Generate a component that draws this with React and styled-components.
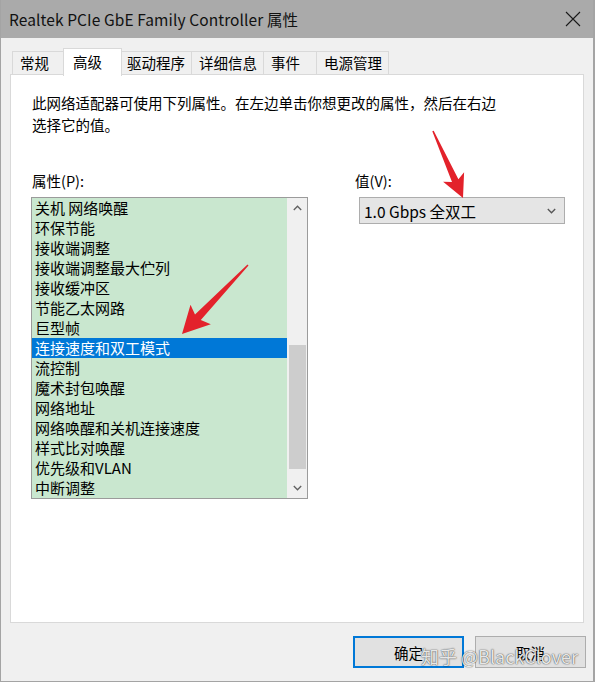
import React from "react";
import styled, { createGlobalStyle } from "styled-components";

const Global = createGlobalStyle`
  html, body { margin: 0; padding: 0; background: #f0f0f0; }
  body { font-family: "Noto Sans CJK SC", "Noto Sans", sans-serif; color: #000; }
`;

const Window = styled.div`
  position: relative;
  width: 595px;
  height: 682px;
  box-sizing: border-box;
  background: #f0f0f0;
  border-left: 1px solid #a4a4a4;
  border-right: 2px solid #a4a4a4;
  border-bottom: 1px solid #a4a4a4;
  display: flex;
  flex-direction: column;
  overflow: hidden;
`;

const TitleBar = styled.div`
  height: 38px;
  flex: none;
  background: #aaaaaa;
  display: flex;
  align-items: center;
  justify-content: space-between;
  padding: 0 14px 0 9px;
  margin-left: -1px;
  margin-right: -2px;
`;

const Title = styled.div`
  font-size: 15.5px;
  color: #111;
  letter-spacing: 0.1px;
`;

const Close = styled.svg`
  width: 16px;
  height: 16px;
`;

const Body = styled.div`
  flex: 1;
  display: flex;
  flex-direction: column;
  padding: 10px 9px 0 9px;
`;

const Tabs = styled.div`
  height: 27px;
  display: flex;
  align-items: flex-end;
  padding-left: 3px;
  position: relative;
  z-index: 1;
`;

const Tab = styled.div`
  box-sizing: border-box;
  min-width: ${(p) => (p.$active ? "59px" : "54px")};
  height: ${(p) => (p.$active ? "28px" : "24px")};
  margin: ${(p) => (p.$active ? "0 -2px -1px -3px" : "0 0 0 -1px")};
  padding: ${(p) => (p.$active ? "2px 9px 0" : "0 6px 0 7px")};
  background: ${(p) => (p.$active ? "#ffffff" : "#f0f0f0")};
  border: 1px solid #d9d9d9;
  border-bottom: ${(p) => (p.$active ? "none" : "1px solid #d9d9d9")};
  font-size: 14.5px;
  line-height: 22px;
  position: relative;
  z-index: ${(p) => (p.$active ? 2 : 1)};
  white-space: nowrap;
`;

const Panel = styled.div`
  height: 549px;
  box-sizing: border-box;
  background: #ffffff;
  border: 1px solid #d9d9d9;
  margin-top: -1px;
  padding: 17px 20px 0 20px;
  display: flex;
  flex-direction: column;
`;

const Desc = styled.p`
  margin: 0;
  font-size: 14.5px;
  line-height: 22px;
  padding-left: 1px;
  white-space: nowrap;
`;

const Columns = styled.div`
  margin-top: 34px;
  display: grid;
  grid-template-columns: 277px 1fr;
  column-gap: 46px;
`;

const Col = styled.div`
  display: flex;
  flex-direction: column;
`;

const Label = styled.div`
  font-size: 14.5px;
  line-height: 22px;
  padding-left: ${(p) => p.$pad || 1}px;
  margin-bottom: 5px;
`;

const ListBox = styled.div`
  box-sizing: border-box;
  width: 277px;
  height: 302px;
  border: 1px solid #9b9b9b;
  background: #c9e7cf;
  display: flex;
`;

const Items = styled.div`
  flex: 1;
  display: flex;
  flex-direction: column;
`;

const Item = styled.div`
  height: 20px;
  line-height: 20px;
  font-size: 15px;
  padding-left: 3px;
  background: ${(p) => (p.$selected ? "#0078d7" : "transparent")};
  color: ${(p) => (p.$selected ? "#ffffff" : "#000")};
  white-space: nowrap;
`;

const ScrollBar = styled.div`
  width: 20px;
  background: #f0f0f0;
  display: flex;
  flex-direction: column;
`;

const ScrollBtn = styled.div`
  height: 20px;
  display: flex;
  align-items: center;
  justify-content: center;
  flex: none;
`;

const Track = styled.div`
  flex: 1;
  display: flex;
  flex-direction: column;
  align-items: center;
  padding-top: ${(p) => p.$offset}px;
`;

const Thumb = styled.div`
  width: 17px;
  height: ${(p) => p.$size}px;
  background: #cdcdcd;
`;

const Combo = styled.div`
  box-sizing: border-box;
  margin-left: 5px;
  width: 206px;
  height: 27px;
  background: #e5e5e5;
  border: 1px solid #adadad;
  display: flex;
  align-items: center;
  justify-content: space-between;
  padding: 0 8px 0 4px;
  font-size: 15.5px;
`;

const Footer = styled.div`
  display: flex;
  justify-content: flex-end;
  gap: 11px;
  padding-top: 13px;
  margin-right: -2px;
`;

const Button = styled.div`
  box-sizing: border-box;
  width: 111px;
  height: 32px;
  background: #e1e1e1;
  border: ${(p) => (p.$default ? "2px solid #0078d7" : "1px solid #adadad")};
  display: flex;
  align-items: center;
  justify-content: center;
  font-size: 14.5px;
`;

const Overlay = styled.svg`
  position: absolute;
  left: -1px;
  top: 0;
  width: 595px;
  height: 682px;
  pointer-events: none;
`;

const Watermark = styled.div`
  position: absolute;
  left: 420px;
  top: 643px;
  font-size: 18px;
  color: rgba(248, 248, 248, 0.92);
  text-shadow: 0 0 1px rgba(0, 0, 0, 0.75), 0 0 2px rgba(0, 0, 0, 0.35);
  white-space: nowrap;
  pointer-events: none;
`;

function arrowPoints(tail, tip, headLen, headHalf, shaftTail, shaftHead) {
  const dx = tip[0] - tail[0];
  const dy = tip[1] - tail[1];
  const L = Math.hypot(dx, dy);
  const ux = dx / L, uy = dy / L;
  const nx = -uy, ny = ux;
  const bx = tip[0] - ux * headLen, by = tip[1] - uy * headLen;
  const nb = 4;
  const bbx = bx + ux * nb, bby = by + uy * nb;
  const pts = [
    [tail[0] + nx * shaftTail / 2, tail[1] + ny * shaftTail / 2],
    [bbx + nx * shaftHead / 2, bby + ny * shaftHead / 2],
    [bx + nx * headHalf, by + ny * headHalf],
    tip,
    [bx - nx * headHalf, by - ny * headHalf],
    [bbx - nx * shaftHead / 2, bby - ny * shaftHead / 2],
    [tail[0] - nx * shaftTail / 2, tail[1] - ny * shaftTail / 2],
  ];
  return pts.map((p) => p[0].toFixed(1) + "," + p[1].toFixed(1)).join(" ");
}

const Chevron = ({ up, color = "#606060", w = 9 }) => (
  <svg width={w} height="6" viewBox="0 0 9 6">
    <path
      d={up ? "M0.8 5 L4.5 1.2 L8.2 5" : "M0.8 1 L4.5 4.8 L8.2 1"}
      fill="none"
      stroke={color}
      strokeWidth="1.3"
    />
  </svg>
);

const tabs = ["常规", "高级", "驱动程序", "详细信息", "事件", "电源管理"];
const items = [
  "关机 网络唤醒",
  "环保节能",
  "接收端调整",
  "接收端调整最大伫列",
  "接收缓冲区",
  "节能乙太网路",
  "巨型帧",
  "连接速度和双工模式",
  "流控制",
  "魔术封包唤醒",
  "网络地址",
  "网络唤醒和关机连接速度",
  "样式比对唤醒",
  "优先级和VLAN",
  "中断调整",
];

export default function App() {
  return (
    <>
      <Global />
      <Window>
        <TitleBar>
          <Title>Realtek PCIe GbE Family Controller 属性</Title>
          <Close viewBox="0 0 16 16">
            <path d="M1 1 L15 15 M15 1 L1 15" stroke="#1a1a1a" strokeWidth="1.1" />
          </Close>
        </TitleBar>
        <Body>
          <Tabs>
            {tabs.map((t, i) => (
              <Tab key={t} $active={i === 1}>
                {t}
              </Tab>
            ))}
          </Tabs>
          <Panel>
            <Desc>
              此网络适配器可使用下列属性。在左边单击你想更改的属性，然后在右边
              <br />
              选择它的值。
            </Desc>
            <Columns>
              <Col>
                <Label>属性(P):</Label>
                <ListBox>
                  <Items>
                    {items.map((it, i) => (
                      <Item key={it} $selected={i === 7}>
                        {it}
                      </Item>
                    ))}
                  </Items>
                  <ScrollBar>
                    <ScrollBtn>
                      <Chevron up />
                    </ScrollBtn>
                    <Track $offset={127}>
                      <Thumb $size={124} />
                    </Track>
                    <ScrollBtn>
                      <Chevron />
                    </ScrollBtn>
                  </ScrollBar>
                </ListBox>
              </Col>
              <Col>
                <Label $pad={0}>值(V):</Label>
                <Combo>
                  <span>1.0 Gbps 全双工</span>
                  <Chevron color="#555" />
                </Combo>
              </Col>
            </Columns>
          </Panel>
          <Footer>
            <Button $default>确定</Button>
            <Button>取消</Button>
          </Footer>
        </Body>
        <Overlay viewBox="0 0 595 682">
          <polygon
            points={arrowPoints([248, 265], [182, 334], 27, 14, 1.5, 8)}
            fill="#e3222b"
          />
          <polygon
            points={arrowPoints([433, 131], [463, 198], 23, 11.5, 1.5, 7)}
            fill="#e3222b"
          />
        </Overlay>
        <Watermark>知乎 @BlackClover</Watermark>
      </Window>
    </>
  );
}
